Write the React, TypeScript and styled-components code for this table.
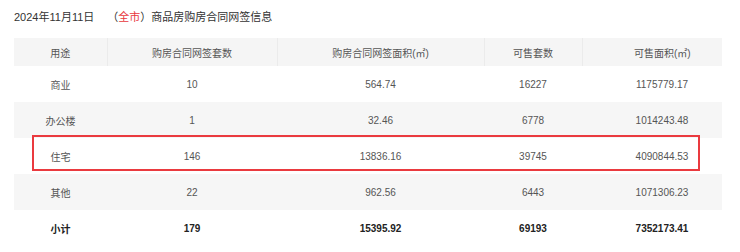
import React from 'react';
import styled, { createGlobalStyle } from 'styled-components';

const GlobalStyle = createGlobalStyle`
  body {
    margin: 0;
    background: #fff;
    font-family: "Liberation Sans", "Noto Sans CJK SC", sans-serif;
  }
`

const Page = styled.div`
  width: 740px;
  height: 252px;
  box-sizing: border-box;
  padding: 8px 18px 0 14px;
  overflow: hidden;
`

const Title = styled.div`
  font-size: 11px;
  line-height: 18px;
  color: #333;
  height: 30px;
  white-space: pre;
`

const City = styled.span`
  margin-left: 13px;
`

const Red = styled.span`
  color: #e8383d;
`

const TableWrap = styled.div`
  position: relative;
  width: 708px;
`

const Table = styled.table`
  width: 100%;
  border-collapse: collapse;
  table-layout: fixed;
  font-size: 10px;
  color: #555;
`

const HeadCell = styled.th<{ $pad?: number }>`
  height: 28px;
  padding: 0 0 0 ${p => p.$pad || 0}px;
  font-weight: normal;
  background: #f5f5f5;
  border: 1px solid #ebebeb;
  border-top: none;
  border-bottom: none;
  text-align: center;
  &:first-child { border-left: none; }
  &:last-child { border-right: none; }
`

const Row = styled.tr<{ $stripe?: boolean; $total?: boolean }>`
  height: 36px;
  background: ${p => (p.$stripe ? '#f6f6f6' : '#fff')};
  font-weight: ${p => (p.$total ? 'bold' : 'normal')};
  color: ${p => (p.$total ? '#222' : '#555')};
`

const Cell = styled.td<{ $pad?: number }>`
  padding: 0 0 0 ${p => p.$pad || 0}px;
  text-align: center;
`

const Highlight = styled.div`
  position: absolute;
  left: 18px;
  top: 97px;
  width: 668px;
  height: 36px;
  box-sizing: border-box;
  border: 2px solid #ea3a3f;
  pointer-events: none;
`

const widths = [93, 170, 207, 98, 140]
const pads = [0, 0, 0, 0, 20]

const heads = ['用途', '购房合同网签套数', '购房合同网签面积(㎡)', '可售套数', '可售面积(㎡)']

const rows = [
  ['商业', '10', '564.74', '16227', '1175779.17'],
  ['办公楼', '1', '32.46', '6778', '1014243.48'],
  ['住宅', '146', '13836.16', '39745', '4090844.53'],
  ['其他', '22', '962.56', '6443', '1071306.23'],
]

const total = ['小计', '179', '15395.92', '69193', '7352173.41']

const App: React.FC = () => {
  return (
    <Page>
      <GlobalStyle />
      <Title>
        2024年11月11日
        <City>
          （<Red>全市</Red>）商品房购房合同网签信息
        </City>
      </Title>
      <TableWrap>
        <Table>
          <colgroup>
            {widths.map((w, i) => <col key={i} style={{ width: w }} />)}
          </colgroup>
          <thead>
            <tr>
              {heads.map((h, i) => <HeadCell key={h} $pad={pads[i]}>{h}</HeadCell>)}
            </tr>
          </thead>
          <tbody>
            {rows.map((r, ri) => (
              <Row key={r[0]} $stripe={ri % 2 === 1}>
                {r.map((c, i) => <Cell key={i} $pad={pads[i]}>{c}</Cell>)}
              </Row>
            ))}
            <Row $total>
              {total.map((c, i) => <Cell key={i} $pad={pads[i]}>{c}</Cell>)}
            </Row>
          </tbody>
        </Table>
        <Highlight />
      </TableWrap>
    </Page>
  )
}

export default App
